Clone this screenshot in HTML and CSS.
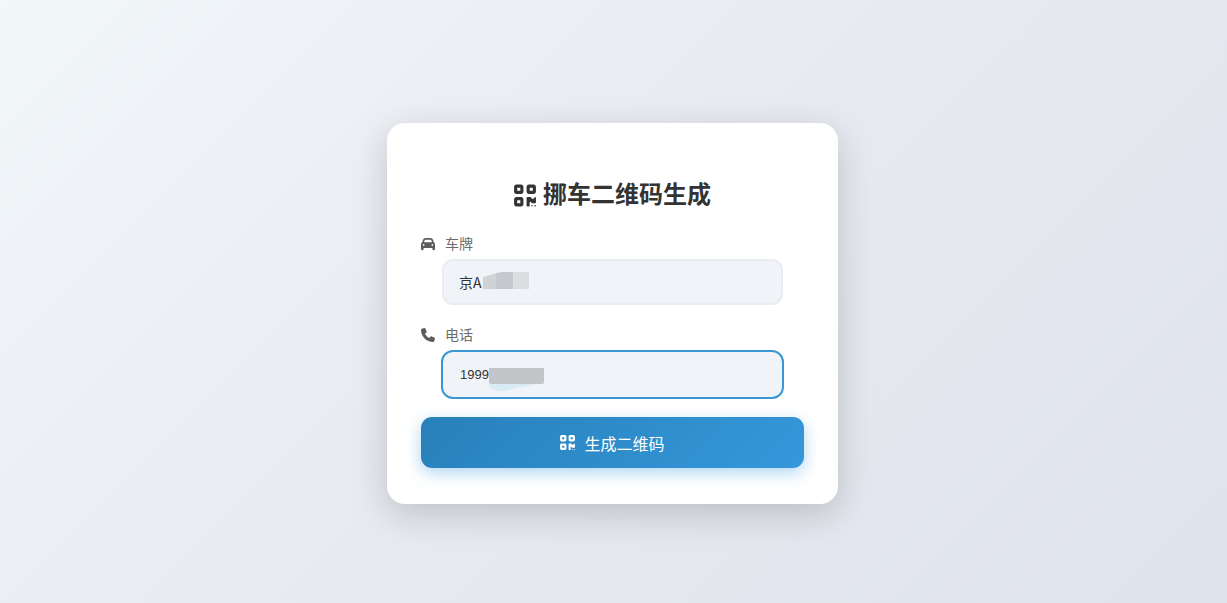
FILE: index.html
```html
<!DOCTYPE html>
<html lang="zh-CN">
<head>
<meta charset="utf-8">
<meta name="viewport" content="width=device-width, initial-scale=1">
<title>挪车二维码生成</title>
<link rel="stylesheet" href="styles.css">
</head>
<body>
<svg class="sprite" aria-hidden="true">
  <symbol id="qrcode" viewBox="0 0 448 512"><path d="M0 80C0 53.5 21.5 32 48 32h96c26.5 0 48 21.5 48 48v96c0 26.5-21.5 48-48 48H48c-26.5 0-48-21.5-48-48V80zM64 96v64h64V96H64zM0 336c0-26.5 21.5-48 48-48h96c26.5 0 48 21.5 48 48v96c0 26.5-21.5 48-48 48H48c-26.5 0-48-21.5-48-48V336zm64 16v64h64V352H64zM304 32h96c26.5 0 48 21.5 48 48v96c0 26.5-21.5 48-48 48H304c-26.5 0-48-21.5-48-48V80c0-26.5 21.5-48 48-48zm80 64H320v64h64V96zM256 304c0-8.8 7.2-16 16-16h64c8.8 0 16 7.2 16 16s7.2 16 16 16h32c8.8 0 16-7.2 16-16s7.2-16 16-16s16 7.2 16 16v96c0 8.8-7.2 16-16 16H368c-8.8 0-16-7.2-16-16s-7.2-16-16-16s-16 7.2-16 16v64c0 8.8-7.2 16-16 16H272c-8.8 0-16-7.2-16-16V304zM368 480a16 16 0 1 1 0-32 16 16 0 1 1 0 32zm64 0a16 16 0 1 1 0-32 16 16 0 1 1 0 32z"/></symbol>
</svg>
<main class="card">
  <h1 class="title"><svg class="title-icon" aria-hidden="true"><use href="#qrcode"/></svg>挪车二维码生成</h1>
  <form class="form">
    <div class="group">
      <label class="label" for="plate">
        <svg class="label-icon" viewBox="0 0 512 512" aria-hidden="true"><path d="M135.2 117.4L109.1 192H402.9l-26.1-74.6C372.3 104.6 360.2 96 346.6 96H165.4c-13.6 0-25.7 8.6-30.2 21.4zM39.6 196.8L74.8 96.3C88.3 57.8 124.6 32 165.4 32H346.6c40.8 0 77.1 25.8 90.6 64.3l35.2 100.5c23.2 9.6 39.6 32.5 39.6 59.2V400v48c0 17.7-14.3 32-32 32H448c-17.7 0-32-14.3-32-32V400H96v48c0 17.7-14.3 32-32 32H32c-17.7 0-32-14.3-32-32V400 256c0-26.7 16.4-49.6 39.6-59.2zM128 288a32 32 0 1 0 -64 0 32 32 0 1 0 64 0zm288 32a32 32 0 1 0 0-64 32 32 0 1 0 0 64z"/></svg>
        车牌
      </label>
      <div class="field">
        <input class="input input-plate" id="plate" type="text" value="京A">
        <svg class="mask mask-plate" viewBox="0 0 46 17" aria-hidden="true"><path fill="#d0d2d5" d="M0 5L14 1v16H0z"/><path fill="#c5c8cc" d="M13 1L19 0h11v17H13z"/><path fill="#dbdde1" d="M30 0h16v17H30z"/></svg>
      </div>
    </div>
    <div class="group">
      <label class="label" for="phone">
        <svg class="label-icon" viewBox="0 0 512 512" aria-hidden="true"><path d="M164.9 24.6c-7.7-18.6-28-28.5-47.4-23.2l-88 24C12.1 30.2 0 46 0 64C0 311.4 200.6 512 448 512c18 0 33.8-12.1 38.6-29.5l24-88c5.3-19.4-4.6-39.7-23.2-47.4l-96-40c-16.3-6.8-35.2-2.1-46.3 11.6L304.7 368C234.3 334.7 177.3 277.7 144 207.3L193.3 167c13.7-11.2 18.4-30 11.6-46.3l-40-96z"/></svg>
        电话
      </label>
      <div class="field field-active">
        <input class="input" id="phone" type="tel" value="1999">
        <svg class="mask mask-phone" viewBox="0 0 55 24" aria-hidden="true"><path fill="#d9ebf5" d="M0 15h54L13 23q-8 1-13-5z"/><path fill="#c3c5c8" d="M0 0h55v14q0 2-2 2H2q-2 0-2-2z"/></svg>
      </div>
    </div>
    <button class="submit" type="button"><svg class="submit-icon" aria-hidden="true"><use href="#qrcode"/></svg>生成二维码</button>
  </form>
</main>
</body>
</html>
```
FILE: styles.css
```css
* {
  box-sizing: border-box;
}

body {
  display: flex;
  align-items: center;
  justify-content: center;
  min-height: 100vh;
  margin: 0;
  padding: 24px 18px 0 16px;
  background: linear-gradient(135deg, #f2f7fa 0%, #e7eaf0 50%, #dfe3ec 100%);
  font-family: "Liberation Sans", "Noto Sans CJK SC", sans-serif;
  color: #333;
}

.sprite {
  position: absolute;
  width: 0;
  height: 0;
}

.card {
  width: 100%;
  max-width: 451px;
  padding: 52px 34px 36px;
  border-radius: 18px;
  background: #fff;
  box-shadow: 0 10px 36px rgba(0, 0, 0, 0.18);
}

.title {
  display: flex;
  align-items: center;
  justify-content: center;
  gap: 7px;
  margin: 0 0 19px;
  font-size: 24px;
  line-height: 40px;
  font-weight: 700;
}

.title-icon {
  width: 22px;
  height: 25px;
  fill: currentColor;
}

.group {
  margin-bottom: 20px;
}

.group + .group {
  margin-bottom: 18px;
}

.label {
  display: flex;
  align-items: center;
  gap: 10px;
  margin-bottom: 5px;
  color: #6b6b6b;
  font-size: 14px;
  line-height: 20px;
}

.label-icon {
  width: 14px;
  height: 14px;
  fill: #5c5c5c;
}

.field {
  position: relative;
  margin: 0 21px;
}

.input {
  display: block;
  width: 100%;
  height: 46px;
  padding: 0 15px;
  border: 2px solid #e9ecf0;
  border-radius: 11px;
  outline: none;
  background: #f0f3f8;
  color: #333;
  font-family: inherit;
  font-size: 13px;
}

.input-plate {
  font-family: "Noto Sans CJK SC", sans-serif;
  font-size: 14px;
}

.field-active {
  margin: 0 20px;
}

.field-active .input {
  height: 49px;
  padding: 0 17px;
  border-color: #3b97d3;
  border-radius: 12px;
}

.mask {
  position: absolute;
}

.mask-plate {
  top: 13px;
  left: 41px;
  width: 46px;
  height: 17px;
}

.mask-phone {
  top: 18px;
  left: 48px;
  width: 55px;
  height: 24px;
}

.submit {
  display: flex;
  align-items: center;
  justify-content: center;
  gap: 9px;
  width: 100%;
  height: 51px;
  border: 0;
  border-radius: 11px;
  background: linear-gradient(135deg, #2980b9, #3498db);
  box-shadow: 0 5px 16px rgba(52, 152, 219, 0.4);
  color: #fff;
  font-family: inherit;
  font-size: 16px;
  cursor: pointer;
}

.submit-icon {
  width: 15px;
  height: 17px;
  fill: currentColor;
}
```
